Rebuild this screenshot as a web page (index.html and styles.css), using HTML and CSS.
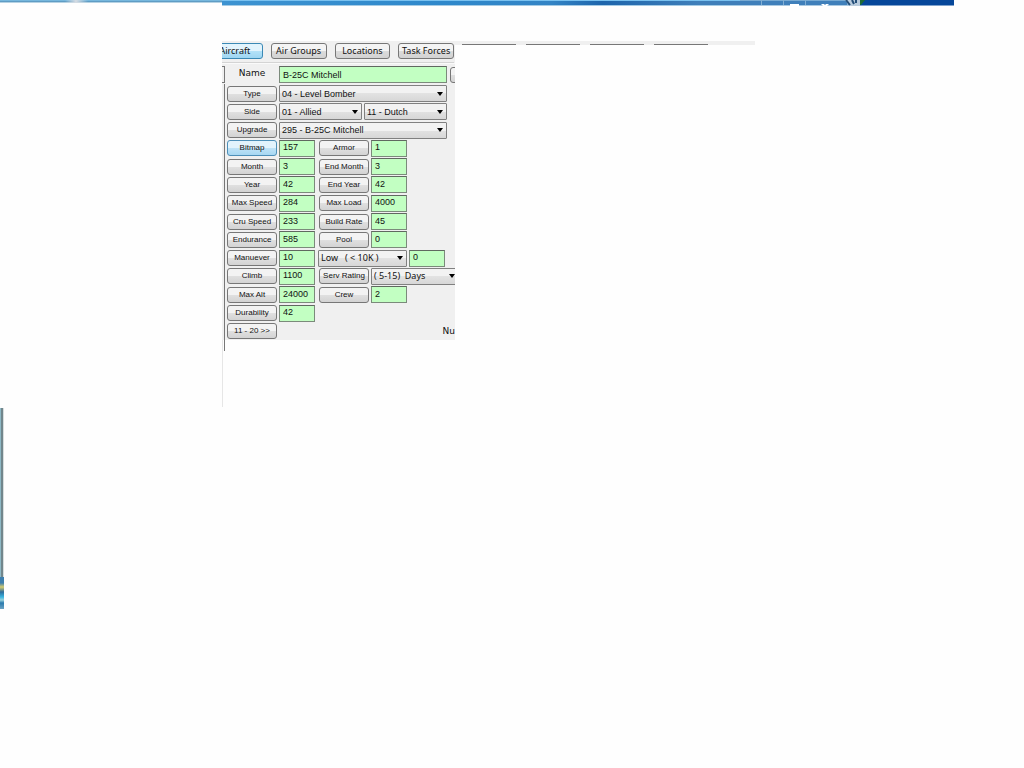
FILE: index.html
```html
<!DOCTYPE html>
<html lang="en">
<head>
<meta charset="utf-8">
<title>Aircraft editor</title>
<link rel="stylesheet" href="styles.css">
</head>
<body>
<header class="titlebar">
  <div class="title-thin"></div>
  <div class="title-main">
    <svg class="window-controls" width="214" height="6" viewBox="0 0 214 6" aria-hidden="true">
      <rect width="120" height="6" fill="#3f7fba"/>
      <rect width="120" height="1" fill="#78aad2"/>
      <rect y="5" width="120" height="1" fill="#a9c9e2"/>
      <path d="M21.500 0V5M43.500 0V5M65.500 0V5M107.500 0V5" stroke="#81aed3"/>
      <path d="M50 4h9v2h-9z" fill="#fff"/>
      <path d="M81 4h3l1 1 1-1h3l-2 2h-4z" fill="#fff"/>
      <path d="M105 0l5 6h10V0z" fill="#b9cbdc"/>
      <path d="M106 0l4 5M112 0l2 4M116 0v3" stroke="#244e78" stroke-width="2"/>
      <path d="M120 0h94v6h-94z" fill="#06479a"/>
      <path d="M120 0h5l-5 6z" fill="#1d6b35"/>
      <path d="M120 5h94v1h-94z" fill="#7fa2cc"/>
    </svg>
  </div>
</header>
<div class="workspace">
  <aside class="rail"><div class="rail-edge"></div><div class="rail-image"></div></aside>
  <main class="editor">
    <div class="panel">
      <nav class="tabs">
        <button class="tab active">Aircraft</button>
        <button class="tab">Air Groups</button>
        <button class="tab">Locations</button>
        <button class="tab">Task Forces</button>
      </nav>
      <form class="form">
        <div class="name-row">
          <span class="list-head"></span>
          <label class="name-label" for="name">Name</label>
          <input class="field wide" id="name" value="B-25C Mitchell">
          <button type="button" class="btn cut" aria-label="More"></button>
        </div>
        <div class="rows">
          <div class="row"><button type="button" class="btn" id="l-type">Type</button><select class="select wide" aria-labelledby="l-type"><option>04 - Level Bomber</option></select></div>
          <div class="row"><button type="button" class="btn" id="l-side">Side</button><select class="select half" aria-labelledby="l-side"><option>01 - Allied</option></select><select class="select half" aria-labelledby="l-side"><option>11 - Dutch</option></select></div>
          <div class="row"><button type="button" class="btn" id="l-upg">Upgrade</button><select class="select wide" aria-labelledby="l-upg"><option>295 - B-25C Mitchell</option></select></div>
          <div class="row"><button type="button" class="btn active" id="l-bmp">Bitmap</button><input class="field" aria-labelledby="l-bmp" value="157"><button type="button" class="btn second" id="l-arm">Armor</button><input class="field" aria-labelledby="l-arm" value="1"></div>
          <div class="row"><button type="button" class="btn" id="l-mon">Month</button><input class="field" aria-labelledby="l-mon" value="3"><button type="button" class="btn second" id="l-em">End Month</button><input class="field" aria-labelledby="l-em" value="3"></div>
          <div class="row"><button type="button" class="btn" id="l-yr">Year</button><input class="field" aria-labelledby="l-yr" value="42"><button type="button" class="btn second" id="l-ey">End Year</button><input class="field" aria-labelledby="l-ey" value="42"></div>
          <div class="row"><button type="button" class="btn" id="l-ms">Max Speed</button><input class="field" aria-labelledby="l-ms" value="284"><button type="button" class="btn second" id="l-ml">Max Load</button><input class="field" aria-labelledby="l-ml" value="4000"></div>
          <div class="row"><button type="button" class="btn" id="l-cs">Cru Speed</button><input class="field" aria-labelledby="l-cs" value="233"><button type="button" class="btn second" id="l-br">Build Rate</button><input class="field" aria-labelledby="l-br" value="45"></div>
          <div class="row"><button type="button" class="btn" id="l-en">Endurance</button><input class="field" aria-labelledby="l-en" value="585"><button type="button" class="btn second" id="l-po">Pool</button><input class="field" aria-labelledby="l-po" value="0"></div>
          <div class="row"><button type="button" class="btn" id="l-mn">Manuever</button><input class="field" aria-labelledby="l-mn" value="10"><select class="select altitude" aria-labelledby="l-mn"><option>Low &nbsp; ( &lt; 10K )</option></select><input class="field" aria-labelledby="l-mn" value="0"></div>
          <div class="row"><button type="button" class="btn" id="l-cl">Climb</button><input class="field" aria-labelledby="l-cl" value="1100"><button type="button" class="btn second" id="l-sr">Serv Rating</button><select class="select days" aria-labelledby="l-sr"><option>( 5-15) &nbsp;Days</option></select></div>
          <div class="row"><button type="button" class="btn" id="l-ma">Max Alt</button><input class="field" aria-labelledby="l-ma" value="24000"><button type="button" class="btn second" id="l-cr">Crew</button><input class="field" aria-labelledby="l-cr" value="2"></div>
          <div class="row"><button type="button" class="btn" id="l-du">Durability</button><input class="field" aria-labelledby="l-du" value="42"></div>
          <div class="row"><button type="button" class="btn">11 - 20 &gt;&gt;</button><span class="count">Nu</span></div>
        </div>
      </form>
    </div>
    <div class="panel-tail"><span class="tail-line"></span></div>
  </main>
  <div class="tab-tops"><span></span><span></span><span></span><span></span></div>
</div>
</body>
</html>
```
FILE: styles.css
```css
* { box-sizing: border-box; }
body {
  margin: 0;
  background: #fefefe;
  color: #111;
  font-family: "Liberation Sans", Arial, sans-serif;
  font-size: 9px;
}
button, input, select { margin: 0; color: inherit; }
.titlebar { display: flex; align-items: flex-start; height: 6px; }
.title-thin {
  flex: none;
  width: 222px;
  height: 3px;
  background: linear-gradient(90deg, transparent 65px, #d5dce3 76px, transparent 88px), linear-gradient(#76b7dd 0 1px, #5f9cc4 1px 2px, #b5d2e3 2px);
}
.title-main {
  display: flex;
  justify-content: flex-end;
  width: 732px;
  height: 6px;
  background: linear-gradient(#7ac2f0 0 1px, transparent 1px 5px, #a5cbe5 5px), linear-gradient(90deg, #3d93d1, #2e88cb 30%, #3384c5 45%, #1d65ac 52%, #3f7fba 65%);
}
.window-controls { display: block; }
.workspace { display: flex; align-items: flex-start; }
.rail { flex: none; width: 222px; padding-top: 402px; }
.rail-edge {
  width: 4px;
  height: 169px;
  background: linear-gradient(90deg, #8eb9c6 0 1px, #71868c 1px 3px, #d8dede 3px);
}
.rail-image {
  width: 4px;
  height: 32px;
  background: linear-gradient(#3e7fae 0 6px, #3e7fae 6px, #d5cc70 10px, #2e6c9b 15px, #38b5e0 20px, #9bd3dc 23px, #2a7aae 26px, #6ba3c4);
}
.editor { flex: none; width: 233px; padding-top: 35px; }
.panel { overflow: hidden; background: #f0f0f0; }
.tabs {
  display: flex;
  gap: 8px;
  width: 247px;
  margin-left: -15px;
  padding: 2px 0 3px;
  border-bottom: 1px solid #d4d4d4;
}
.tab {
  flex: 1;
  height: 16px;
  padding: 0;
  border: 1px solid #777;
  border-radius: 3px;
  background: linear-gradient(#f4f4f4 50%, #dcdcdc 50%, #d2d2d2);
  font: 9px/14px "Noto Sans", sans-serif;
  white-space: nowrap;
}
.tab.active { border-color: #3b89b5; background: linear-gradient(#e2f4fd 50%, #b4e2f8 50%, #9ed6f2); }
.form { border-top: 1px solid #fafafa; padding-top: 1px; }
.name-row { display: flex; gap: 2px; align-items: center; height: 19px; }
.list-head { flex: none; width: 3px; height: 17px; border: 1px solid #777; border-left: 0; }
.name-label { flex: none; align-self: flex-start; width: 50px; padding-top: 2px; text-align: center; font: 9px/12px "DejaVu Sans", sans-serif; }
.rows {
  display: flex;
  flex-direction: column;
  justify-content: space-between;
  min-height: 256px;
  margin-left: 2px;
  border-left: 1px solid #777;
  padding: 1px 0 0 2px;
}
.row { display: flex; gap: 2px; align-items: center; height: 17px; }
.btn {
  flex: none;
  width: 50px;
  height: 16px;
  padding: 0;
  border: 1px solid #777;
  border-radius: 3px;
  background: linear-gradient(#f3f3f3 50%, #e0e0e0 50%, #d3d3d3);
  font: 8px/14px "Liberation Sans", Arial, sans-serif;
  white-space: nowrap;
}
.btn.active { border-color: #4d8fb8; background: linear-gradient(#e2f3fc 50%, #bfe3f7 50%, #a7d7f2); }
.btn.second { margin-left: 2px; }
.btn.cut { margin-left: 1px; }
.field {
  flex: none;
  width: 36px;
  height: 17px;
  padding: 0 3px 2px;
  border: 1px solid #7b8a7b;
  border-top-color: #606860;
  border-radius: 0;
  background: #c2ffc2;
  font: 9px/13px "Liberation Sans", Arial, sans-serif;
}
.field.wide { padding: 0 3px; }
.wide { width: 168px; }
.select {
  flex: none;
  height: 17px;
  padding: 0 12px 0 2px;
  border: 1px solid #808080;
  border-radius: 1px;
  appearance: none;
  background: url("data:image/svg+xml,%3Csvg xmlns='http://www.w3.org/2000/svg' width='6' height='4'%3E%3Cpath d='M0 0h6L3 4z'/%3E%3C/svg%3E") right 3px center no-repeat, linear-gradient(#f2f2f2 50%, #e2e2e2 50%, #d7d7d7);
  font: 9px/14px "Liberation Sans", Arial, sans-serif;
}
.select.half { width: 83px; }
.altitude { width: 89px; margin-left: 1px; }
.altitude, .days { font-family: "Noto Sans", sans-serif; }
.days { width: 88px; }
.count { margin-left: auto; font: 9px/12px "DejaVu Sans", sans-serif; }
.field.wide, .select.wide { width: 168px; }
.panel-tail { height: 67px; border-left: 1px solid #e6e6e6; }
.tail-line { display: block; width: 2px; height: 11px; border-right: 1px solid #777; }
.tab-tops {
  display: flex;
  gap: 10px;
  width: 300px;
  height: 4px;
  margin-top: 35px;
  padding: 3px 0 0 7px;
  background: #f0f0f0;
}
.tab-tops span { width: 54px; height: 1px; background: #777; }
```
